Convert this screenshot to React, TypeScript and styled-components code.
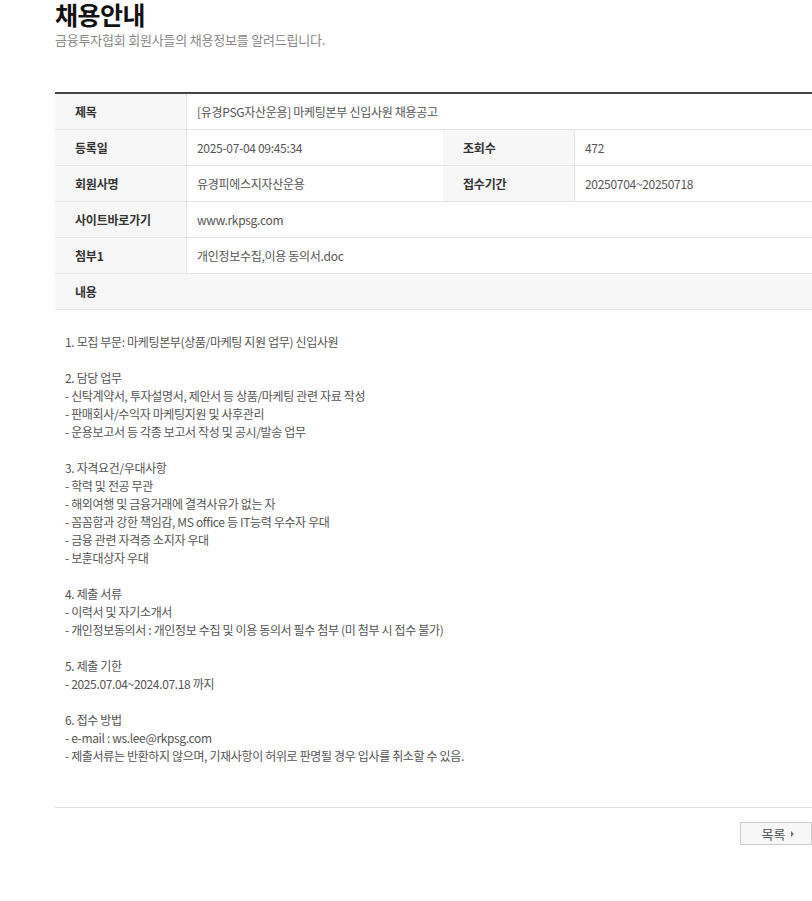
import styled, { createGlobalStyle } from "styled-components";

const GlobalStyle = createGlobalStyle`
  html, body {
    margin: 0;
    padding: 0;
    background: #fff;
    overflow-x: hidden;
  }
  body {
    font-family: "Noto Sans CJK KR", "Noto Sans", sans-serif;
    color: #555;
  }
`;

const info = [
  { label: "제목", value: "[유경PSG자산운용] 마케팅본부 신입사원 채용공고" },
  { label: "등록일", value: "2025-07-04 09:45:34", label2: "조회수", value2: "472" },
  { label: "회원사명", value: "유경피에스지자산운용", label2: "접수기간", value2: "20250704~20250718" },
  { label: "사이트바로가기", value: "www.rkpsg.com" },
  { label: "첨부1", value: "개인정보수집,이용 동의서.doc" },
];

const body = [
  ["1. 모집 부문: 마케팅본부(상품/마케팅 지원 업무) 신입사원"],
  [
    "2. 담당 업무",
    "- 신탁계약서, 투자설명서, 제안서 등 상품/마케팅 관련 자료 작성",
    "- 판매회사/수익자 마케팅지원 및 사후관리",
    "- 운용보고서 등 각종 보고서 작성 및 공시/발송 업무",
  ],
  [
    "3. 자격요건/우대사항",
    "- 학력 및 전공 무관",
    "- 해외여행 및 금융거래에 결격사유가 없는 자",
    "- 꼼꼼함과 강한 책임감, MS office 등 IT능력 우수자 우대",
    "- 금융 관련 자격증 소지자 우대",
    "- 보훈대상자 우대",
  ],
  [
    "4. 제출 서류",
    "- 이력서 및 자기소개서",
    "- 개인정보동의서 : 개인정보 수집 및 이용 동의서 필수 첨부 (미 첨부 시 접수 불가)",
  ],
  ["5. 제출 기한", "- 2025.07.04~2024.07.18 까지"],
  [
    "6. 접수 방법",
    "- e-mail : ws.lee@rkpsg.com",
    "- 제출서류는 반환하지 않으며, 기재사항이 허위로 판명될 경우 입사를 취소할 수 있음.",
  ],
];

export default function App() {
  return (
    <>
      <GlobalStyle />
      <Page>
        <Title>채용안내</Title>
        <Subtitle>금융투자협회 회원사들의 채용정보를 알려드립니다.</Subtitle>

        <Table>
          {info.map((row) => (
            <Row key={row.label}>
              <Label>{row.label}</Label>
              <Value $wide={!row.label2}>{row.value}</Value>
              {row.label2 && (
                <>
                  <Label>{row.label2}</Label>
                  <Value>{row.value2}</Value>
                </>
              )}
            </Row>
          ))}
          <Row>
            <FullLabel>내용</FullLabel>
          </Row>
        </Table>

        <Content>
          {body.map((section, i) => (
            <Section key={i}>
              {section.map((line) => (
                <Line key={line}>{line}</Line>
              ))}
            </Section>
          ))}
        </Content>

        <Footer>
          <ListButton>
            목록
            <Arrow />
          </ListButton>
        </Footer>
      </Page>
    </>
  );
}

const Page = styled.div`
  width: 1100px;
  padding: 2px 0 0 55px;
  box-sizing: border-box;
`;

const Title = styled.h1`
  margin: 0;
  font-size: 25px;
  line-height: 24px;
  font-weight: 700;
  color: #111;
  letter-spacing: -0.5px;
`;

const Subtitle = styled.p`
  margin: 5px 0 0;
  font-size: 13px;
  line-height: 18px;
  color: #888;
  letter-spacing: -0.2px;
`;

const Table = styled.div`
  margin-top: 43px;
  border-top: 2px solid #444;
`;

const Row = styled.div`
  display: flex;
  height: 36px;
  border-bottom: 1px solid #e5e5e5;
  box-sizing: border-box;
`;

const Label = styled.div`
  width: 132px;
  flex-shrink: 0;
  background: #f7f7f7;
  border-right: 1px solid #e5e5e5;
  box-sizing: border-box;
  padding-left: 20px;
  display: flex;
  align-items: center;
  font-size: 12px;
  font-weight: 700;
  color: #333;
  letter-spacing: -0.2px;
`;

const FullLabel = styled(Label)`
  flex: 1;
  border-right: none;
`;

const Value = styled.div<{ $wide?: boolean }>`
  width: ${(p) => (p.$wide ? "auto" : "256px")};
  flex: ${(p) => (p.$wide ? 1 : "none")};
  box-sizing: border-box;
  padding-left: 10px;
  display: flex;
  align-items: center;
  font-size: 12px;
  color: #555;
  letter-spacing: -0.3px;
`;

const Content = styled.div`
  padding: 23px 10px 42px;
  border-bottom: 1px solid #ddd;
  display: flex;
  flex-direction: column;
  gap: 18px;
`;

const Section = styled.div``;

const Line = styled.div`
  font-size: 12px;
  line-height: 18px;
  color: #555;
  white-space: nowrap;
  letter-spacing: -0.35px;
`;

const Footer = styled.div`
  width: 757px;
  display: flex;
  justify-content: flex-end;
  padding-top: 14px;
`;

const ListButton = styled.button`
  width: 72px;
  height: 23px;
  border: 1px solid #ccc;
  background: #f7f7f7;
  font-family: "Noto Sans CJK KR", sans-serif;
  font-size: 13px;
  color: #555;
  display: flex;
  align-items: center;
  justify-content: center;
  gap: 6px;
  padding: 0 0 0 4px;
  box-sizing: border-box;
`;

const Arrow = styled.span`
  width: 0;
  height: 0;
  border-top: 3px solid transparent;
  border-bottom: 3px solid transparent;
  border-left: 3px solid #777;
`;
